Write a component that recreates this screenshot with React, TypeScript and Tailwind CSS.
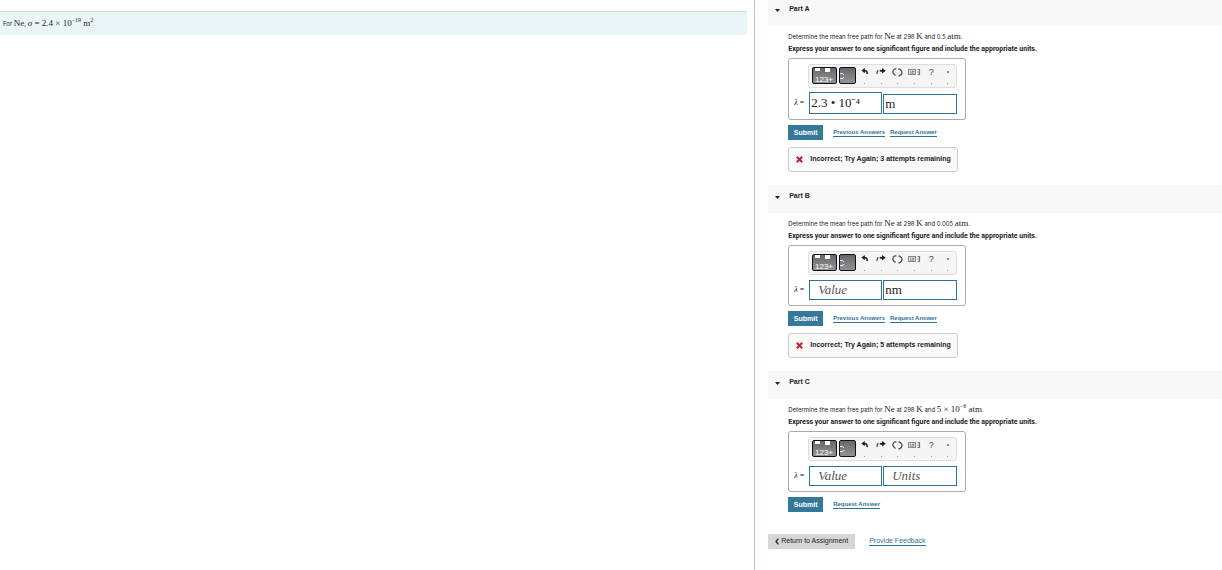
import { useState } from 'react'
import type { ReactNode } from 'react'

const SERIF = "font-['Liberation_Serif',serif]"

interface AnswerBoxProps {
    id: string
    value?: string
    units?: string
    tall?: boolean
}

interface PartProps extends AnswerBoxProps {
    title: string
    question: ReactNode
    attempts?: number
}

function MathText({ children }: { children: ReactNode }) {
    return <span className={`${SERIF} text-[9px]`}>{children}</span>
}

function Sup({ children }: { children: ReactNode }) {
    return <sup className="static align-[4px] text-[6px] leading-none">{children}</sup>
}

function UndoIcon() {
    return (
        <svg width="8" height="8" viewBox="0 0 8 8" fill="none">
            <path d="M3.8 0 0.4 2.6 3.8 5.2z" fill="#222" />
            <path d="M3 2.6C5.2 2.4 6.2 3.6 6.3 6" stroke="#222" strokeWidth="1.6" />
        </svg>
    )
}

function RedoIcon() {
    return (
        <svg width="10" height="8" viewBox="0 0 10 8" fill="none">
            <path d="M6 0 9.8 2.8 6 5.6z" fill="#222" />
            <path d="M3.8 2.8h2.6" stroke="#222" strokeWidth="1.8" />
            <path d="M2.4 2.4C1.2 3 0.9 4.2 0.9 6" stroke="#444" strokeWidth="1.2" />
        </svg>
    )
}

function ResetIcon() {
    return (
        <svg width="11" height="9" viewBox="0 0 11 9" fill="none" stroke="#444" strokeWidth="1.2">
            <path d="M4.4 0.8H3C1.4 1.6 0.6 3 0.9 4.4c0.2 1.2 1 2 2.6 3" />
            <path d="M6.4 1.2H8c1.4 1 2.2 2 2.1 3.4C10 6 9.2 7 7.6 7.8H6.4" />
        </svg>
    )
}

function KeyboardIcon() {
    return (
        <svg width="13" height="8" viewBox="0 0 13 8" fill="none">
            <rect x="0.5" y="1.5" width="7" height="5" fill="#ddd" stroke="#888" />
            <path d="M2 3.4h1M4 3.4h2.4M2 5h4" stroke="#777" strokeWidth="0.9" />
            <path d="M9.5 1.5h2v5h-2M9.5 4h2" stroke="#777" strokeWidth="1.2" />
        </svg>
    )
}

const tools = [
    { label: 'Undo', icon: <UndoIcon /> },
    { label: 'Redo', icon: <RedoIcon /> },
    { label: 'Reset', icon: <ResetIcon /> },
    { label: 'Keyboard shortcuts', icon: <KeyboardIcon /> },
    { label: 'Help', icon: '?' },
    { label: 'More', icon: <span className="size-0.5 bg-[#888]" /> },
]

function Toolbar() {
    return (
        <div className="flex h-6 items-start rounded-[3px] border border-[#ddd] bg-[#f5f5f5] pt-0.5 pl-[3px]">
            <button aria-label="Templates" className="h-[17px] w-[25px] rounded-[2px] border border-[#111] bg-linear-to-b from-[#66666b] to-[#929297]">
                <svg width="23" height="15" viewBox="0 0 23 15">
                    <path d="M2 0h5v3H2zM12 0h5v4h-5z" fill="#fff" />
                    <text x="2" y="14" fontSize="8" fill="#fff" fontFamily="Liberation Sans">123+</text>
                </svg>
            </button>
            <button aria-label="Symbols" className="ml-0.5 h-[17px] w-[17px] overflow-hidden rounded-[2px] border border-[#111] bg-linear-to-b from-[#66666b] to-[#929297]">
                <svg width="15" height="15" viewBox="0 0 15 15" fill="none" stroke="#eee">
                    <path d="M0 5.5h2.5L4 7M0 10.5h3L4 9" />
                </svg>
            </button>
            {tools.map((tool) => (
                <button key={tool.label} aria-label={tool.label} className="flex h-[17px] flex-1 flex-col items-center justify-between text-[9px] leading-[10px] text-[#444]">
                    <span className="flex h-[10px] items-center">{tool.icon}</span>
                    <span className="size-px bg-[#999]" />
                </button>
            ))}
        </div>
    )
}

function AnswerBox({ id, value = '', units = '', tall = false }: AnswerBoxProps) {
    const [amount, setAmount] = useState(value)
    const [unit, setUnit] = useState(units)
    const field = `${SERIF} min-w-0 border border-[#2f7396] bg-white text-[13px] text-[#222] outline-none placeholder:text-[#555] placeholder:italic placeholder-shown:pl-2 pl-px`

    return (
        <div className="mt-0.5 w-[178px] rounded-[3px] border border-[#aaa] py-[5px] pr-2 pl-[5px]">
            <div className="pl-[14px]">
                <Toolbar />
            </div>
            <div className={`flex items-end ${tall ? 'mt-1' : 'mt-[5px]'}`}>
                <label htmlFor={`${id}-value`} className={`${SERIF} w-[15px] self-center text-[8px] whitespace-nowrap`}>
                    <i>λ</i> =
                </label>
                <input
                    id={`${id}-value`}
                    placeholder="Value"
                    value={amount}
                    onChange={(e) => setAmount(e.target.value)}
                    className={`${field} w-[73px] ${tall ? 'h-[22px] pb-0.5' : 'h-5'}`}
                />
                <input
                    aria-label="Units"
                    placeholder="Units"
                    value={unit}
                    onChange={(e) => setUnit(e.target.value)}
                    className={`${field} ml-px h-5 flex-1`}
                />
            </div>
        </div>
    )
}

function SmallLink({ children }: { children: ReactNode }) {
    return (
        <a href="#" className="border-b border-[#2f7396] text-[6px] leading-[7px] font-bold text-[#2f7396]">
            {children}
        </a>
    )
}

function Part({ title, question, attempts, ...answer }: PartProps) {
    const [isOpen, setIsOpen] = useState(true)

    return (
        <section className="mb-[13px]">
            <h2 className="bg-[#f8f8f8]">
                <button onClick={() => setIsOpen(!isOpen)} className="flex h-7 w-full items-start gap-[9px] px-[7px] pt-1.5 text-[7px] leading-[10px] font-bold">
                    <svg width="5" height="3" viewBox="0 0 5 3" className="mt-[5px]">
                        <path d="M0 0h5L2.5 3z" fill="#222" />
                    </svg>
                    {title}
                </button>
            </h2>
            {isOpen && (
                <div className="px-5 pt-1">
                    <p className="font-[Inter,sans-serif] text-[6px] leading-[13px]">{question}</p>
                    <p className="font-[Roboto,sans-serif] text-[7px] leading-[13px] font-bold">
                        Express your answer to one significant figure and include the appropriate units.
                    </p>
                    <AnswerBox {...answer} />
                    <div className="mt-[5px] flex items-center gap-[5px]">
                        <button className="mr-[5px] h-[15px] w-[35px] bg-[#34789a] text-[7px] leading-[14px] font-bold text-white">Submit</button>
                        {attempts && <SmallLink>Previous Answers</SmallLink>}
                        <SmallLink>Request Answer</SmallLink>
                    </div>
                    {attempts && (
                        <div className="mt-[7px] flex h-[25px] w-[170px] items-center gap-[7px] rounded-[3px] border border-[#ccc] bg-[#fafafa] pb-px pl-[7px] text-[7px] font-bold whitespace-nowrap">
                            <svg width="7" height="7" viewBox="0 0 7 7" stroke="#c92028" strokeWidth="2">
                                <path d="M0.8 0.8 6.2 6.2M6.2 0.8 0.8 6.2" />
                            </svg>
                            Incorrect; Try Again; {attempts} attempts remaining
                        </div>
                    )}
                </div>
            )}
        </section>
    )
}

export default function App() {
    return (
        <div className="flex h-screen overflow-hidden bg-white font-['Liberation_Sans',sans-serif] text-[#222]">
            <aside className="w-[61.8%] border-r border-[#b4c8d8] pt-[11px] pr-[7px]">
                <p className="border-t border-[#d5dfe1] bg-[#e9f5f7] px-[3px] py-[5px] font-[Inter,sans-serif] text-[6px] leading-[13px]">
                    For <MathText>Ne</MathText>, <MathText><i>σ</i> = 2.4 × 10<Sup>−19</Sup> m<Sup>2</Sup></MathText>.
                </p>
            </aside>
            <main className="-mt-0.5 min-w-0 flex-1 pl-[13px]">
                <Part
                    id="a"
                    title="Part A"
                    question={<>Determine the mean free path for <MathText>Ne</MathText> at 298 <MathText>K</MathText> and 0.5 <MathText>atm</MathText>.</>}
                    value="2.3 • 10⁻⁴"
                    units="m"
                    tall
                    attempts={3}
                />
                <Part
                    id="b"
                    title="Part B"
                    question={<>Determine the mean free path for <MathText>Ne</MathText> at 298 <MathText>K</MathText> and 0.005 <MathText>atm</MathText>.</>}
                    units="nm"
                    attempts={5}
                />
                <Part
                    id="c"
                    title="Part C"
                    question={<>Determine the mean free path for <MathText>Ne</MathText> at 298 <MathText>K</MathText> and <MathText>5 × 10<Sup>−6</Sup> atm</MathText>.</>}
                />
                <div className="mt-[22px] flex items-center gap-3.5">
                    <button className="flex h-[15px] w-[87px] items-center justify-center gap-0.5 bg-[#d6d6d6] text-[7px]">
                        <svg width="4" height="7" viewBox="0 0 4 7" fill="none" stroke="#222" strokeWidth="1.3">
                            <path d="M3.4 0.6 1 3.5 3.4 6.4" />
                        </svg>
                        Return to Assignment
                    </button>
                    <a href="#" className="border-b border-[#2f7396] text-[7px] leading-[8px] text-[#2f7396]">Provide Feedback</a>
                </div>
            </main>
        </div>
    )
}
